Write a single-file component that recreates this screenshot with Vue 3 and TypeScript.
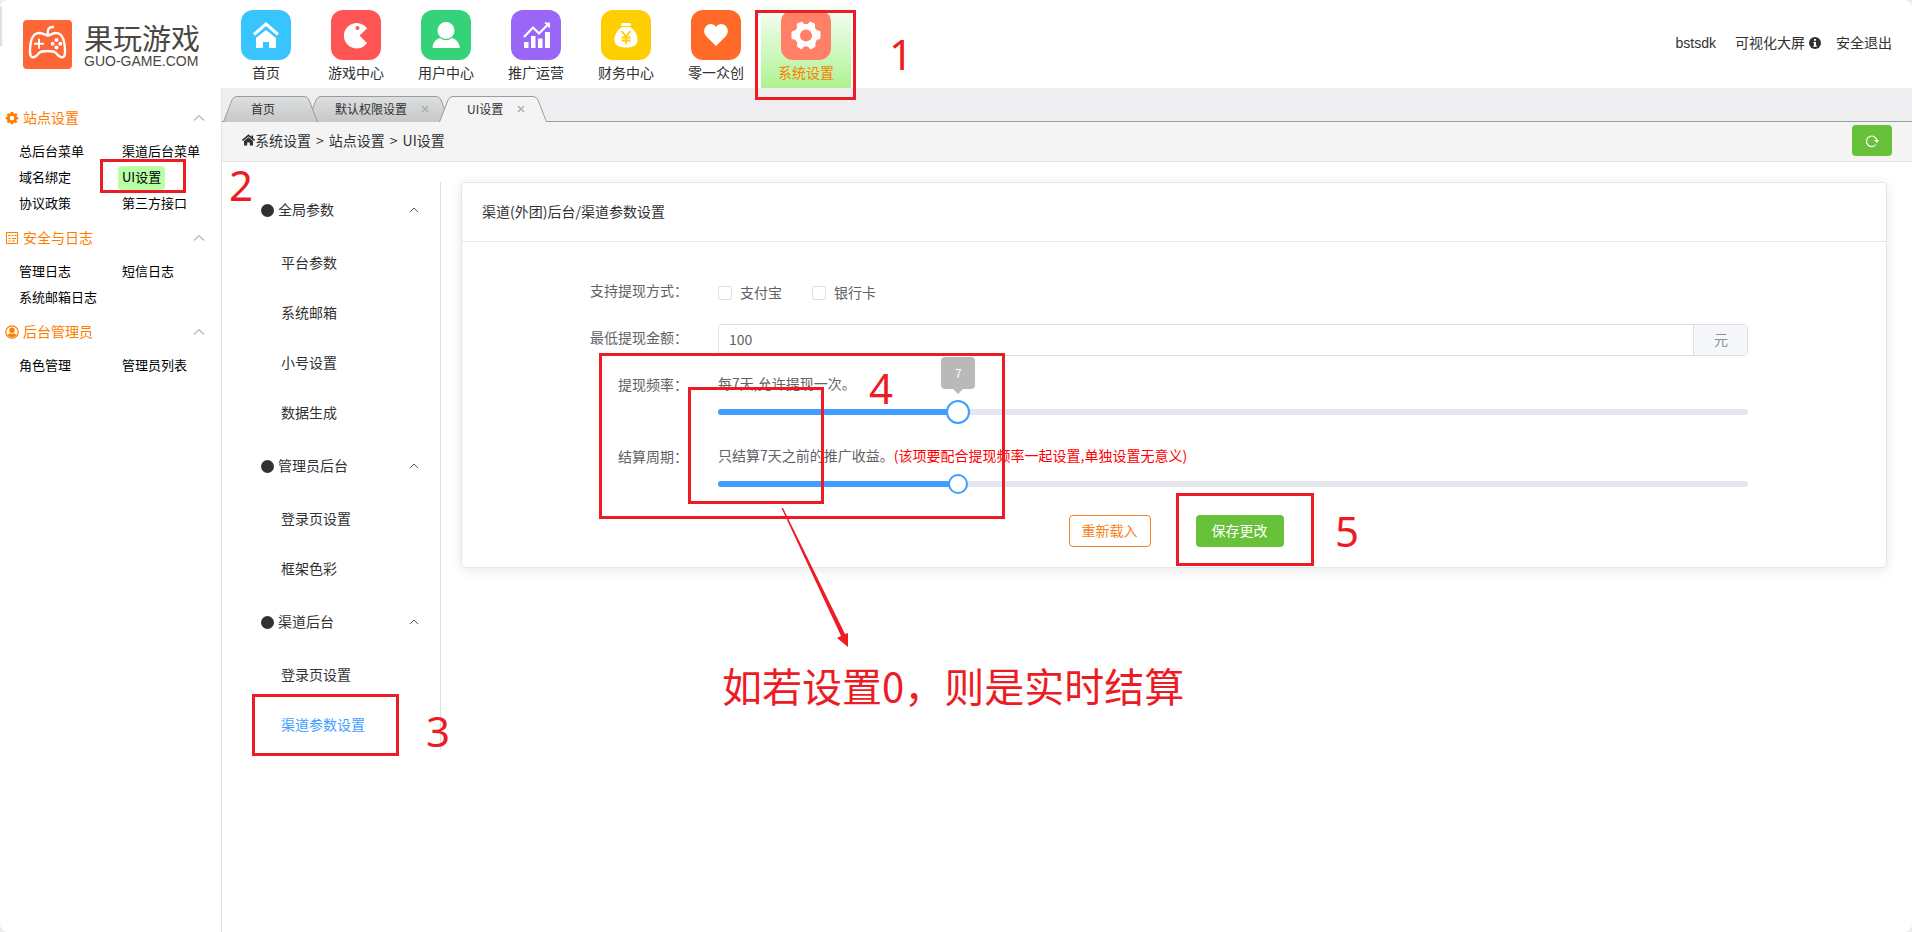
<script setup lang="ts">
import { ref } from 'vue'

interface NavItem {
  label: string
  color: string
  icon: string
  active?: boolean
}

interface Tab {
  label: string
  width: number
  closable: boolean
  active?: boolean
}

interface SideGroup {
  title: string
  icon: 'gear' | 'log' | 'user'
  items: string[]
}

interface MenuGroup {
  title: string
  items: string[]
}

const navItems: NavItem[] = [
  { label: '首页', color: '#38c4ff', icon: 'home' },
  { label: '游戏中心', color: '#ff5454', icon: 'game' },
  { label: '用户中心', color: '#35d27a', icon: 'user' },
  { label: '推广运营', color: '#9966f8', icon: 'chart' },
  { label: '财务中心', color: '#ffce00', icon: 'money' },
  { label: '零一众创', color: '#ff6a28', icon: 'heart' },
  { label: '系统设置', color: '#ff8066', icon: 'gear', active: true },
]

const tabs: Tab[] = [
  { label: '首页', width: 95, closable: false },
  { label: '默认权限设置', width: 143, closable: true },
  { label: 'UI设置', width: 108, closable: true, active: true },
]

const sideGroups: SideGroup[] = [
  {
    title: '站点设置',
    icon: 'gear',
    items: ['总后台菜单', '渠道后台菜单', '域名绑定', 'UI设置', '协议政策', '第三方接口'],
  },
  { title: '安全与日志', icon: 'log', items: ['管理日志', '短信日志', '系统邮箱日志'] },
  { title: '后台管理员', icon: 'user', items: ['角色管理', '管理员列表'] },
]

const menuGroups: MenuGroup[] = [
  { title: '全局参数', items: ['平台参数', '系统邮箱', '小号设置', '数据生成'] },
  { title: '管理员后台', items: ['登录页设置', '框架色彩'] },
  { title: '渠道后台', items: ['登录页设置', '渠道参数设置'] },
]

const activeSide = ref('UI设置')
const activeMenu = ref('渠道参数设置')
const amount = ref('100')
const frequency = ref(7)
const settleDays = ref(7)
const maxDays = 30

const tabPath = (w: number): string =>
  `M0.5 26 L9 4 Q10.5 0.5 14 0.5 H${w - 14} Q${w - 10.5} 0.5 ${w - 9} 4 L${w - 0.5} 26`

const percent = (n: number): string => `${(n / maxDays) * 100}%`
</script>

<template>
  <div class="page">
    <header class="top">
      <a class="brand" href="#">
        <svg class="brand-mark" viewBox="0 0 49 49" aria-hidden="true">
          <rect width="49" height="49" rx="4" fill="#ff6637" />
          <g fill="none" stroke="#fff" stroke-width="2.4" stroke-linecap="round" stroke-linejoin="round">
            <path d="M25 15C24 9 26 7 30 7" />
            <path d="M25 15.5C21 15 20 13 16 13C9 13 7 22 7 32C7 40 12 38 16 33C18 31 20 31 24.5 31C29 31 31 31 33 33C37 38 42 40 42 32C42 22 40 13 33 13C29 13 29 15 25 15.5Z" />
            <path d="M16 19.5V28M11.8 23.7H20.2" stroke-width="2" />
          </g>
          <g fill="#fff">
            <circle cx="33.5" cy="20" r="2" />
            <circle cx="33.5" cy="27.5" r="2" />
            <circle cx="29.7" cy="23.7" r="2" />
            <circle cx="37.3" cy="23.7" r="2" />
          </g>
        </svg>
        <span class="brand-text">
          <span class="brand-cn">果玩游戏</span>
          <span class="brand-en">GUO-GAME.COM</span>
        </span>
      </a>

      <nav class="nav">
        <a v-for="item in navItems" :key="item.label" href="#" class="nav-item" :class="{ active: item.active }">
          <svg class="nav-icon" viewBox="0 0 50 50" aria-hidden="true">
            <rect width="50" height="50" rx="12" :fill="item.color" />
            <g v-if="item.icon === 'home'">
              <path d="M13 24.5L25 14L37 24.5" fill="none" stroke="#fff" stroke-width="3" />
              <path d="M15 28L25 20L35 28V38H28V32H22V38H15Z" fill="#fff" />
            </g>
            <g v-else-if="item.icon === 'game'">
              <path d="M36 18.5A12.7 12.7 0 1 0 36 33L28.5 25.5Z" fill="#fff" />
              <circle cx="26.5" cy="18" r="2" :fill="item.color" />
            </g>
            <g v-else-if="item.icon === 'user'" fill="#fff">
              <circle cx="25" cy="20.5" r="8.5" />
              <path d="M11.5 38C12 32 15 29 19 28Q25 32.5 31 28C35 29 38 32 39 38Z" />
            </g>
            <g v-else-if="item.icon === 'chart'" fill="#fff">
              <path d="M13 32H17.5V38H13ZM20 26H24.5V38H20ZM27 28.5H31.5V38H27ZM34 22H39V38H34Z" />
              <path d="M13 27L22 17.5L28 23.5L37 14.5" fill="none" stroke="#fff" stroke-width="2.2" />
              <path d="M33 12.5H39V18.5Z" />
            </g>
            <g v-else-if="item.icon === 'money'">
              <path d="M21 17H29C34 20 36.5 25 36.5 30C36.5 35.5 32 37.5 25 37.5C18 37.5 13.5 35.5 13.5 30C13.5 25 16 20 21 17Z" fill="#fff" />
              <rect x="20" y="13" width="10" height="3" rx="1.5" fill="#fff" />
              <path d="M20.5 21L25 26.5L29.5 21M25 26V34M20.5 27.5H29.5M20.5 30.5H29.5" fill="none" :stroke="item.color" stroke-width="1.8" />
            </g>
            <path
              v-else-if="item.icon === 'heart'"
              d="M25 36L15 26C10 20 16 13 21 14.2Q23.5 14.5 25 17Q26.5 14.5 29 14.2C34 13 40 20 35 26Z"
              fill="#fff"
            />
            <g v-else>
              <path
                d="M21 12L23 14.5H27L29 12L33.5 14V18L35.5 20.5L39 21.5V28.5L35.5 29.5L34 32.5V36.5L29.5 39L27 36H23L20.5 39L16.5 36.5L16.8 32.5L14.5 29.5L11 28.5V22L14.5 20.5L16.5 18L16.2 14Z"
                fill="#fff"
                stroke="#fff"
                stroke-linejoin="round"
              />
              <circle cx="25" cy="25.5" r="6" :fill="item.color" />
            </g>
          </svg>
          <span>{{ item.label }}</span>
        </a>
      </nav>

      <div class="account">
        <a href="#">bstsdk</a>
        <a href="#" class="screen-link">
          可视化大屏
          <svg class="info" viewBox="0 0 12 12" aria-hidden="true">
            <circle cx="6" cy="6" r="6" fill="#303133" />
            <path d="M5 2H7V3.7H5ZM4.3 5H7V8.5H7.8V9.7H4.3V8.5H5V6H4.3Z" fill="#fff" />
          </svg>
        </a>
        <a href="#">安全退出</a>
      </div>
    </header>

    <div class="body">
      <aside class="side">
        <section v-for="group in sideGroups" :key="group.title">
          <button type="button" class="side-title">
            <svg v-if="group.icon === 'gear'" class="side-icon" viewBox="0 0 14 14" aria-hidden="true">
              <path
                fill="currentColor"
                fill-rule="evenodd"
                d="M5.8 1H8.2L8.6 2.5L9.5 2.9L10.9 2.1L12.4 3.8L11.5 5.2L11.8 6L13.2 6.3V8.2L11.7 8.6L11.4 9.3L12.2 10.7L10.7 12.2L9.4 11.4L8.5 11.7L8.2 13.2H5.9L5.5 11.7L4.6 11.3L3.3 12.2L1.7 10.6L2.5 9.3L2.2 8.5L0.8 8.2V6.1L2.3 5.7L2.6 5L1.7 3.7L3.3 2.1L4.6 2.9L5.4 2.5ZM7 4.8A2.3 2.3 0 1 0 7 9.4A2.3 2.3 0 1 0 7 4.8Z"
              />
            </svg>
            <svg v-else-if="group.icon === 'log'" class="side-icon" viewBox="0 0 14 14" aria-hidden="true">
              <path
                fill="none"
                stroke="currentColor"
                d="M1.5 1.5H12.5V12.5H1.5ZM3 4.5H5.5M6.5 4.5H8.5M9.5 4.5H11.5M3.5 7.5H5.5M7 7.5H11M3.5 10H5.5M7 10H10"
              />
            </svg>
            <svg v-else class="side-icon" viewBox="0 0 14 14" aria-hidden="true">
              <circle cx="7" cy="7" r="6.2" fill="none" stroke="currentColor" stroke-width="1.3" />
              <circle cx="7" cy="5.3" r="2.7" fill="currentColor" />
              <path d="M2.8 10.8Q3.2 8.6 5.2 8.2Q7 9.2 8.8 8.2Q10.8 8.6 11.2 10.8Q7 13.5 2.8 10.8Z" fill="currentColor" />
            </svg>
            <span class="title-text">{{ group.title }}</span>
            <svg class="side-arrow" viewBox="0 0 12 8" aria-hidden="true">
              <path d="M1 6.5L6 1.5L11 6.5" fill="none" stroke="#b4b7bd" stroke-width="1.2" />
            </svg>
          </button>
          <div class="side-list">
            <a
              v-for="item in group.items"
              :key="item"
              href="#"
              :class="{ active: item === activeSide }"
              @click.prevent="activeSide = item"
            >{{ item }}</a>
          </div>
        </section>
      </aside>

      <main class="main">
        <div class="tabs">
          <div v-for="tab in tabs" :key="tab.label" class="tab" :class="{ active: tab.active }" :style="{ width: tab.width + 'px' }">
            <svg class="tab-shape" :width="tab.width" height="26" aria-hidden="true">
              <defs>
                <linearGradient id="tab-fill" x1="0" y1="0" x2="0" y2="1">
                  <stop offset="0" stop-color="#dedfdf" />
                  <stop offset="1" stop-color="#c6c7c9" />
                </linearGradient>
              </defs>
              <path :d="tabPath(tab.width)" :fill="tab.active ? '#f4f4f4' : 'url(#tab-fill)'" stroke="#999b9e" />
            </svg>
            <button type="button" class="tab-label">{{ tab.label }}</button>
            <button v-if="tab.closable" type="button" class="tab-close" aria-label="关闭">
              <svg viewBox="0 0 8 8" aria-hidden="true"><path d="M1 1L7 7M7 1L1 7" stroke="#a9afb5" stroke-width="1.5" /></svg>
            </button>
          </div>
        </div>

        <div class="crumbs">
          <div class="trail">
            <svg class="crumb-home" viewBox="0 0 13 12" aria-hidden="true">
              <path d="M0.5 6.5L6.5 1.3L12.5 6.5M10.3 1.5V4" fill="none" stroke="#303133" stroke-width="1.6" />
              <path d="M2 7L6.5 3.3L11 7V11.5H7.8V8.5H5.2V11.5H2Z" fill="#303133" />
            </svg>
            <a href="#">系统设置</a><i>&gt;</i><a href="#">站点设置</a><i>&gt;</i><span>UI设置</span>
          </div>
          <button type="button" class="refresh" aria-label="刷新">
            <svg viewBox="0 0 14 14" aria-hidden="true">
              <path d="M11 10.5A5.3 5.3 0 1 1 12 6.5" fill="none" stroke="#fff" stroke-width="1.2" />
              <path d="M9 6H14L12 9Z" fill="#fff" />
            </svg>
          </button>
        </div>

        <div class="content">
          <nav class="menu">
            <section v-for="group in menuGroups" :key="group.title">
              <button type="button" class="menu-title">
                <span class="dot"></span>
                <span class="title-text">{{ group.title }}</span>
                <svg class="menu-arrow" viewBox="0 0 10 6" aria-hidden="true">
                  <path d="M1 5L5 1L9 5" fill="none" stroke="#55585d" />
                </svg>
              </button>
              <a
                v-for="item in group.items"
                :key="item"
                href="#"
                class="menu-item"
                :class="{ active: item === activeMenu }"
                @click.prevent="activeMenu = item"
              >{{ item }}</a>
            </section>
          </nav>

          <section class="card">
            <h1>渠道(外团)后台/渠道参数设置</h1>
            <form @submit.prevent>
              <div class="row">
                <span id="ways" class="label">支持提现方式：</span>
                <div class="checks" role="group" aria-labelledby="ways">
                  <label><input type="checkbox" /><span class="title-text">支付宝</span></label>
                  <label><input type="checkbox" /><span class="title-text">银行卡</span></label>
                </div>
              </div>
              <div class="row">
                <label for="amount" class="label">最低提现金额：</label>
                <div class="input-group">
                  <input id="amount" v-model="amount" type="text" />
                  <span>元</span>
                </div>
              </div>
              <div class="row slider-row">
                <label for="frequency" class="label">提现频率：</label>
                <div>
                  <p>每{{ frequency }}天,允许提现一次。</p>
                  <div class="slider hovered">
                    <div class="fill" :style="{ width: percent(frequency) }"></div>
                    <output class="tip" :style="{ left: percent(frequency) }">{{ frequency }}</output>
                    <input id="frequency" v-model.number="frequency" type="range" min="0" :max="maxDays" />
                  </div>
                </div>
              </div>
              <div class="row slider-row">
                <label for="settle" class="label">结算周期：</label>
                <div>
                  <p>只结算{{ settleDays }}天之前的推广收益。<em>(该项要配合提现频率一起设置,单独设置无意义)</em></p>
                  <div class="slider">
                    <div class="fill" :style="{ width: percent(settleDays) }"></div>
                    <input id="settle" v-model.number="settleDays" type="range" min="0" :max="maxDays" />
                  </div>
                </div>
              </div>
              <div class="actions">
                <button type="button" class="reload">重新载入</button>
                <button type="submit" class="save">保存更改</button>
              </div>
            </form>
          </section>
        </div>
      </main>
    </div>

    <svg class="notes">
      <g fill="none" stroke="#ed1c24" stroke-width="3">
        <rect x="756.5" y="11.5" width="98" height="87" />
        <rect x="101.5" y="160.5" width="83" height="31" />
        <rect x="253.5" y="695.5" width="144" height="59" />
        <rect x="600.5" y="354.5" width="403" height="163" />
        <rect x="689.5" y="388.5" width="133" height="114" />
        <rect x="1177.5" y="494.5" width="135" height="70" />
      </g>
      <path d="M781.5 508L783 508L845 634L848 633V647L837 638L841 636Z" fill="#ed1c24" />
      <g class="marks">
        <text x="889" y="70">1</text>
        <text x="229" y="201">2</text>
        <text x="426" y="747">3</text>
        <text x="869" y="404">4</text>
        <text x="1335" y="547">5</text>
      </g>
      <text class="remark" x="722" y="702">如若设置0，则是实时结算</text>
    </svg>
  </div>
</template>

<style>
body {
  margin: 0;
  background: #ececee;
}
</style>

<style scoped>
.page {
  position: relative;
  display: flex;
  flex-direction: column;
  min-height: 100vh;
  overflow: hidden;
  border-radius: 8px;
  background: #fff;
  color: #303133;
  font: 14px/20px 'Noto Sans CJK SC', 'Noto Sans', sans-serif;
}

.page::before {
  content: '';
  position: absolute;
  top: 6px;
  left: 0;
  width: 3px;
  height: 40px;
  background: linear-gradient(90deg, #d4d4d4, #fff);
}

a {
  color: inherit;
  text-decoration: none;
}

button {
  padding: 0;
  border: 0;
  background: none;
  color: inherit;
  font: inherit;
  cursor: pointer;
}

.title-text {
  padding-bottom: 2px;
}

.top {
  display: flex;
  height: 88px;
}

.brand {
  display: flex;
  flex: none;
  gap: 12px;
  box-sizing: border-box;
  width: 221px;
  padding: 20px 0 0 23px;
  color: #4a4742;
}

.brand-mark {
  width: 49px;
  height: 49px;
}

.brand-text {
  display: flex;
  flex-direction: column;
}

.brand-cn {
  font-size: 29px;
  line-height: 34px;
}

.brand-en {
  font: 14px/14px 'Liberation Sans', sans-serif;
}

.nav {
  display: flex;
}

.nav-item {
  display: flex;
  flex-direction: column;
  align-items: center;
  gap: 2px;
  width: 90px;
  padding-top: 10px;
}

.nav-item.active {
  background: linear-gradient(#fff, #adf392);
  color: #ff7c00;
}

.nav-icon {
  width: 50px;
  height: 50px;
}

.account {
  display: flex;
  gap: 15px;
  align-items: center;
  margin-left: auto;
  padding: 0 20px 2px 0;
  font-family: 'Liberation Sans', 'Noto Sans CJK SC', sans-serif;
}

.account a:first-child {
  margin-right: 4px;
}

.screen-link {
  display: flex;
  gap: 4px;
  align-items: center;
}

.info {
  width: 12px;
  height: 12px;
}

.body {
  display: flex;
  flex: 1;
}

.side {
  flex: none;
  box-sizing: border-box;
  width: 222px;
  padding-top: 9px;
  border-right: 1px solid #e2e3e6;
}

.side-title {
  display: flex;
  align-items: center;
  width: 100%;
  height: 42px;
  padding: 0 16px 0 5px;
  color: #ff7c00;
}

.side-icon {
  width: 14px;
  height: 14px;
  margin-right: 4px;
}

.side-arrow {
  width: 12px;
  height: 8px;
  margin-left: auto;
}

.side-list {
  display: grid;
  grid-template-columns: 103px 1fr;
  padding-left: 15px;
  color: #000;
  font-size: 13px;
}

.side-list a {
  justify-self: start;
  margin: 1px 0;
  padding: 0 4px 2px;
  border-radius: 4px;
  line-height: 22px;
  white-space: nowrap;
}

.side-list a.active {
  background: #b9ffa5;
}

.main {
  flex: 1;
  min-width: 0;
}

.tabs {
  display: flex;
  align-items: flex-end;
  box-sizing: border-box;
  height: 34px;
  padding-left: 1px;
  border-bottom: 1px solid #999b9e;
  background: #eeeef0;
}

.tab {
  position: relative;
  display: flex;
  flex: none;
  gap: 14px;
  align-items: center;
  box-sizing: border-box;
  height: 26px;
  margin-bottom: -1px;
  padding-left: 28px;
  font-size: 12px;
}

.tab + .tab {
  margin-left: -11px;
}

.tab:first-child,
.tab.active {
  z-index: 1;
}

.tab-shape {
  position: absolute;
  inset: 0;
}

.tab-label,
.tab-close {
  position: relative;
  height: 24px;
}

.tab-close {
  display: flex;
  align-items: center;
}

.tab-close svg {
  width: 8px;
  height: 8px;
}

.crumbs {
  display: flex;
  align-items: center;
  box-sizing: border-box;
  height: 40px;
  padding: 0 20px;
  border-bottom: 1px solid #e2e3e6;
  background: #f4f4f4;
}

.trail {
  display: flex;
  align-items: center;
  padding-bottom: 3px;
}

.trail i {
  margin: 0 5px;
  font-style: normal;
}

.crumb-home {
  width: 13px;
  height: 12px;
}

.refresh {
  display: flex;
  align-items: center;
  justify-content: center;
  width: 40px;
  height: 31px;
  margin: 0 0 2px auto;
  border-radius: 4px;
  background: #67c23a;
}

.refresh svg {
  width: 14px;
  height: 14px;
}

.content {
  display: flex;
  gap: 20px;
  align-items: flex-start;
  padding: 20px 25px 20px 19px;
}

.menu {
  flex: none;
  box-sizing: border-box;
  width: 200px;
  border-right: 1px solid #dcdfe6;
}

.menu-title {
  display: flex;
  gap: 4px;
  align-items: center;
  width: 100%;
  height: 56px;
  padding: 0 21px 0 20px;
}

.dot {
  width: 13px;
  height: 13px;
  border-radius: 50%;
  background: #303133;
}

.menu-arrow {
  width: 10px;
  height: 6px;
  margin-left: auto;
}

.menu-item {
  display: block;
  padding: 0 0 2px 40px;
  line-height: 48px;
}

.menu-item.active {
  color: #409eff;
}

.card {
  flex: 1;
  min-width: 0;
  border: 1px solid #e4e7ed;
  border-radius: 4px;
  box-shadow: 0 2px 12px rgba(0, 0, 0, 0.1);
}

h1 {
  margin: 0;
  padding: 18px 20px 20px;
  border-bottom: 1px solid #e4e7ed;
  font-size: 14px;
  font-weight: 400;
  line-height: 20px;
}

form {
  padding: 33px 138px 20px 20px;
  color: #606266;
}

.row {
  display: grid;
  grid-template-columns: 206px 1fr;
  gap: 30px;
  min-height: 47px;
}

.label {
  line-height: 30px;
  text-align: right;
}

.checks {
  display: flex;
  gap: 30px;
  align-items: center;
  height: 36px;
}

.checks label {
  display: flex;
  gap: 8px;
  align-items: center;
}

.checks input {
  width: 14px;
  height: 14px;
  margin: 0;
  border: 1px solid #dcdfe6;
  border-radius: 2px;
  background: #fff;
  appearance: none;
}

.input-group {
  display: flex;
  box-sizing: border-box;
  height: 32px;
  margin-top: 2px;
  border: 1px solid #dcdfe6;
  border-radius: 4px;
  background: #fff;
}

.input-group input {
  flex: 1;
  min-width: 0;
  padding: 0 10px 2px;
  border: 0;
  outline: 0;
  background: none;
  color: #606266;
  font: inherit;
}

.input-group span {
  padding: 0 19px 2px 20px;
  border-left: 1px solid #dcdfe6;
  background: #f5f7fa;
  color: #909399;
  line-height: 28px;
}

.slider-row {
  min-height: 72px;
}

p {
  margin: 0;
  line-height: 28px;
}

em {
  color: #ff0000;
  font-style: normal;
}

.slider {
  position: relative;
  height: 6px;
  margin-top: 12px;
  border-radius: 3px;
  background: #e4e7ed;
}

.fill {
  height: 6px;
  border-radius: 3px 0 0 3px;
  background: #409eff;
}

.slider input {
  position: absolute;
  top: -9px;
  left: -10px;
  width: calc(100% + 20px);
  height: 24px;
  margin: 0;
  background: none;
  appearance: none;
}

.slider input::-webkit-slider-thumb {
  box-sizing: border-box;
  width: 20px;
  height: 20px;
  border: 2px solid #409eff;
  border-radius: 50%;
  background: #fff;
  appearance: none;
}

.slider.hovered input {
  left: -12px;
  width: calc(100% + 24px);
}

.slider.hovered input::-webkit-slider-thumb {
  width: 24px;
  height: 24px;
}

.tip {
  position: absolute;
  bottom: 26px;
  width: 34px;
  margin-left: -17px;
  border-radius: 4px;
  background: #b9b9b9;
  color: #fff;
  font-size: 12px;
  line-height: 32px;
  text-align: center;
}

.tip::after {
  content: '';
  position: absolute;
  top: 100%;
  left: 12px;
  border: 5px solid transparent;
  border-top-color: #b9b9b9;
}

.actions {
  display: flex;
  gap: 45px;
  align-items: center;
  justify-content: center;
  padding: 2px 0 0 122px;
}

.reload,
.save {
  box-sizing: border-box;
  height: 32px;
  padding-bottom: 2px;
  border-radius: 4px;
}

.reload {
  width: 82px;
  border: 1px solid #fa8020;
  color: #fa8020;
}

.save {
  width: 88px;
  background: #67c23a;
  color: #fff;
}

.notes {
  position: absolute;
  top: 0;
  left: 0;
  width: 100%;
  height: 100%;
  pointer-events: none;
}

.marks {
  fill: #ed1c24;
  font: 42px 'Noto Sans', sans-serif;
}

.remark {
  fill: #ed1c24;
  font: 40px 'Noto Sans CJK SC', sans-serif;
}
</style>
